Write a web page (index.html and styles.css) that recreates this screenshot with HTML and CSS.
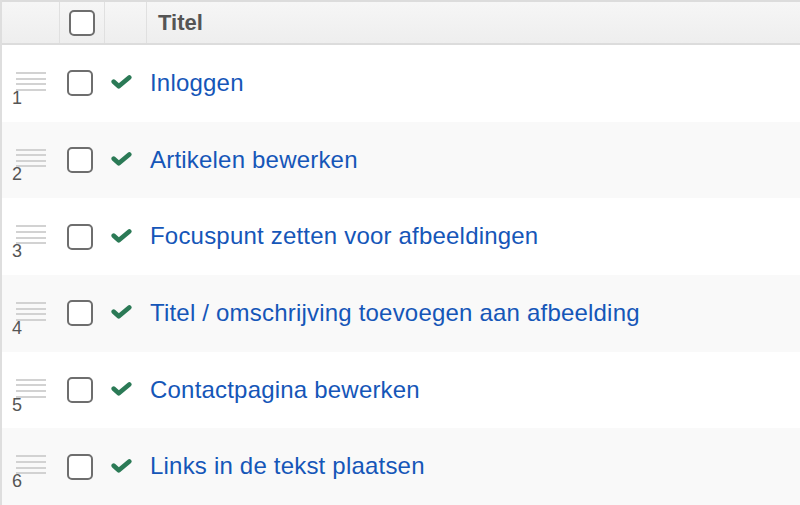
FILE: index.html
```html
<!DOCTYPE html>
<html lang="nl">
<head>
<meta charset="utf-8">
<title>Artikelen</title>
<link rel="stylesheet" href="styles.css">
</head>
<body>
<div class="table">
  <div class="thead">
    <div class="th th-drag"></div>
    <div class="th th-check"><span class="box"></span></div>
    <div class="th th-status"></div>
    <div class="th th-title">Titel</div>
  </div>
  <div class="row">
    <div class="td td-drag"><span class="handle"><i></i><i></i><i></i><i></i></span><span class="num">1</span></div>
    <div class="td td-check"><span class="box"></span></div>
    <div class="td td-status"><svg class="ok" viewBox="0 0 20 13"><polyline points="2.6,6.2 7.4,10.6 17.4,2.2"/></svg></div>
    <div class="td td-title"><a href="#">Inloggen</a></div>
  </div>
  <div class="row">
    <div class="td td-drag"><span class="handle"><i></i><i></i><i></i><i></i></span><span class="num">2</span></div>
    <div class="td td-check"><span class="box"></span></div>
    <div class="td td-status"><svg class="ok" viewBox="0 0 20 13"><polyline points="2.6,6.2 7.4,10.6 17.4,2.2"/></svg></div>
    <div class="td td-title"><a href="#">Artikelen bewerken</a></div>
  </div>
  <div class="row">
    <div class="td td-drag"><span class="handle"><i></i><i></i><i></i><i></i></span><span class="num">3</span></div>
    <div class="td td-check"><span class="box"></span></div>
    <div class="td td-status"><svg class="ok" viewBox="0 0 20 13"><polyline points="2.6,6.2 7.4,10.6 17.4,2.2"/></svg></div>
    <div class="td td-title"><a href="#">Focuspunt zetten voor afbeeldingen</a></div>
  </div>
  <div class="row">
    <div class="td td-drag"><span class="handle"><i></i><i></i><i></i><i></i></span><span class="num">4</span></div>
    <div class="td td-check"><span class="box"></span></div>
    <div class="td td-status"><svg class="ok" viewBox="0 0 20 13"><polyline points="2.6,6.2 7.4,10.6 17.4,2.2"/></svg></div>
    <div class="td td-title"><a href="#">Titel / omschrijving toevoegen aan afbeelding</a></div>
  </div>
  <div class="row">
    <div class="td td-drag"><span class="handle"><i></i><i></i><i></i><i></i></span><span class="num">5</span></div>
    <div class="td td-check"><span class="box"></span></div>
    <div class="td td-status"><svg class="ok" viewBox="0 0 20 13"><polyline points="2.6,6.2 7.4,10.6 17.4,2.2"/></svg></div>
    <div class="td td-title"><a href="#">Contactpagina bewerken</a></div>
  </div>
  <div class="row">
    <div class="td td-drag"><span class="handle"><i></i><i></i><i></i><i></i></span><span class="num">6</span></div>
    <div class="td td-check"><span class="box"></span></div>
    <div class="td td-status"><svg class="ok" viewBox="0 0 20 13"><polyline points="2.6,6.2 7.4,10.6 17.4,2.2"/></svg></div>
    <div class="td td-title"><a href="#">Links in de tekst plaatsen</a></div>
  </div>
</div>
</body>
</html>
```

FILE: styles.css
```css
html, body {
  margin: 0;
  padding: 0;
  background: #ffffff;
  font-family: "Liberation Sans", Arial, sans-serif;
  overflow: hidden;
}

.table {
  border-left: 2px solid #dedede;
  width: 820px;
}

.thead,
.row {
  display: grid;
  grid-template-columns: 58px 45px 42px 1fr;
}

.thead {
  height: 45px;
  box-sizing: border-box;
  border-top: 2px solid #dcdcdc;
  border-bottom: 2px solid #dcdcdc;
  background: linear-gradient(#f6f6f6, #eeeeee);
}

.th {
  box-sizing: border-box;
  border-right: 1px solid #e0e0e0;
  display: flex;
  align-items: center;
}

.th-check {
  padding-left: 9px;
}

.th-title {
  border-right: none;
  padding-left: 11px;
  font-size: 22px;
  font-weight: bold;
  color: #555555;
  padding-top: 1px;
}

.box {
  display: block;
  width: 26px;
  height: 26px;
  box-sizing: border-box;
  border: 2px solid #6e6e6e;
  border-radius: 5px;
  background: #ffffff;
}

.row {
  height: 76.7px;
  background: #ffffff;
}

.row:nth-child(odd) {
  background: #f9f9f9;
}

.td {
  display: flex;
  align-items: center;
}

.td-drag {
  flex-direction: column;
  align-items: flex-start;
  padding-top: 27px;
}

.handle {
  display: flex;
  flex-direction: column;
  gap: 3.6px;
  margin-left: 14px;
  width: 30px;
}

.handle i {
  display: block;
  height: 2px;
  background: #d2d2d2;
}

.num {
  margin-left: 10px;
  margin-top: -2px;
  font-size: 18px;
  line-height: 18px;
  color: #555555;
}

.td-check {
  padding-left: 7px;
}

.td-status {
  padding-left: 6px;
  padding-bottom: 2px;
}

.ok {
  width: 21px;
  height: 14px;
  display: block;
}

.ok polyline {
  fill: none;
  stroke: #2b7a56;
  stroke-width: 4.4;
  stroke-linecap: round;
  stroke-linejoin: round;
}

.td-title {
  padding-left: 3px;
  padding-bottom: 1px;
}

.td-title a {
  font-size: 24px;
  letter-spacing: 0.2px;
  color: #1556b8;
  text-decoration: none;
}
```
